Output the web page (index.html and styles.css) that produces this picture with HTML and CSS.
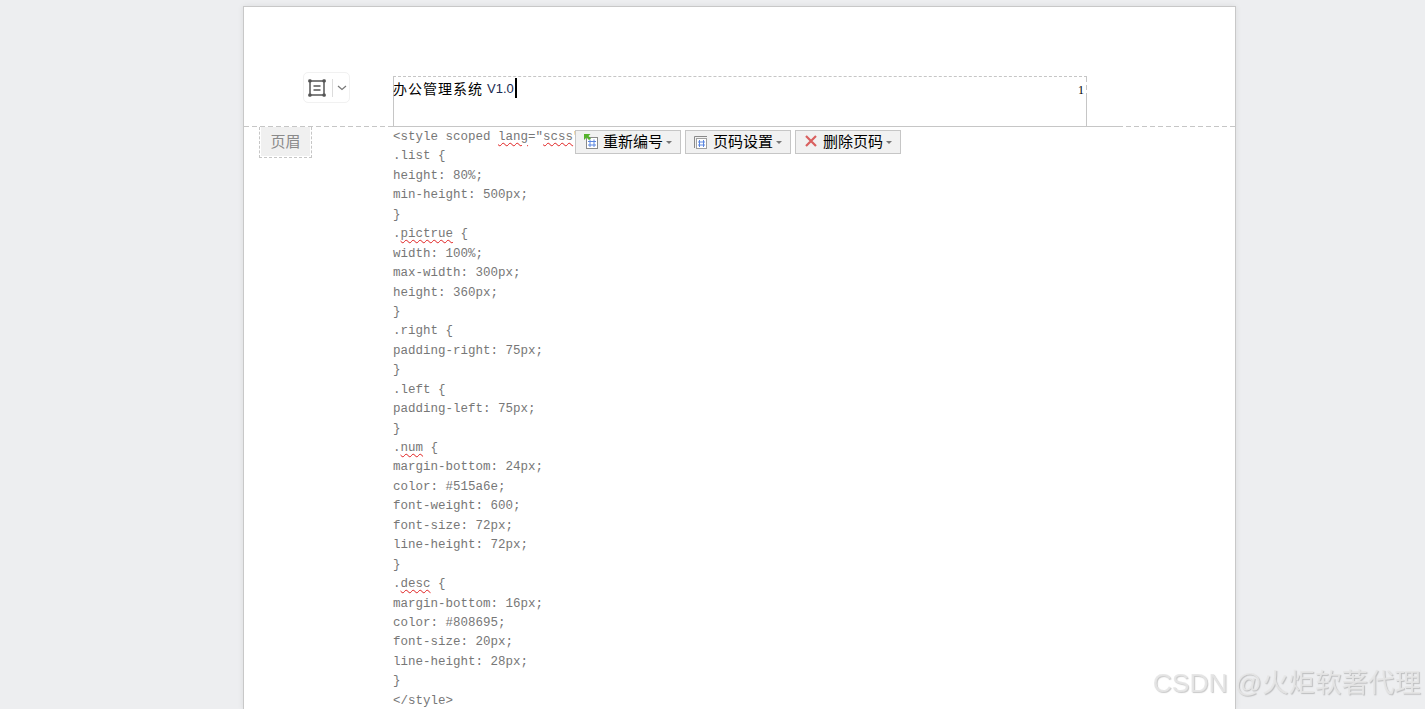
FILE: index.html
```html
<!DOCTYPE html>
<html lang="zh-CN">
<head>
<meta charset="utf-8">
<title>办公管理系统 V1.0</title>
<link rel="stylesheet" href="styles.css">
</head>
<body>
<main class="page">
  <section class="header">
    <div class="margin-col">
      <div class="handle">
        <svg class="handle-icon" width="20" height="20" viewBox="0 0 20 20">
          <rect x="3" y="3" width="14" height="14" fill="none" stroke="#555" stroke-width="1.5"/>
          <rect x="1.2" y="1.2" width="3.4" height="3.4" rx="1.4" fill="#555"/>
          <rect x="15.4" y="1.2" width="3.4" height="3.4" rx="1.4" fill="#555"/>
          <rect x="1.2" y="15.4" width="3.4" height="3.4" rx="1.4" fill="#555"/>
          <rect x="15.4" y="15.4" width="3.4" height="3.4" rx="1.4" fill="#555"/>
          <path d="M6.500 8h7M6.500 12h7" stroke="#555" stroke-width="1.300"/>
        </svg>
        <span class="handle-sep"></span>
        <svg class="handle-caret" width="10" height="6" viewBox="0 0 10 6"><path d="M1 1l4 3.500L9 1" fill="none" stroke="#777" stroke-width="1.200"/></svg>
      </div>
    </div>
    <div class="title-box">
      <div class="title-line"><span class="title-zh">办公管理系统</span><span class="title-ver">V1.0</span><span class="caret"></span></div>
      <div class="page-num">1</div>
    </div>
  </section>
  <section class="rule"><span class="rule-dash rule-left"></span><span class="rule-solid"></span><span class="rule-dash rule-right"></span></section>
  <section class="body">
    <div class="margin-col">
      <div class="tag"><span class="tag-inner">页眉</span></div>
    </div>
    <div class="code">
      <div class="line">&lt;style scoped <span class="typo">lang</span>="<span class="typo">scss</span>"&gt;</div>
      <div class="line">.list {</div>
      <div class="line">height: 80%;</div>
      <div class="line">min-height: 500px;</div>
      <div class="line">}</div>
      <div class="line">.<span class="typo">pictrue</span> {</div>
      <div class="line">width: 100%;</div>
      <div class="line">max-width: 300px;</div>
      <div class="line">height: 360px;</div>
      <div class="line">}</div>
      <div class="line">.right {</div>
      <div class="line">padding-right: 75px;</div>
      <div class="line">}</div>
      <div class="line">.left {</div>
      <div class="line">padding-left: 75px;</div>
      <div class="line">}</div>
      <div class="line">.<span class="typo">num</span> {</div>
      <div class="line">margin-bottom: 24px;</div>
      <div class="line">color: #515a6e;</div>
      <div class="line">font-weight: 600;</div>
      <div class="line">font-size: 72px;</div>
      <div class="line">line-height: 72px;</div>
      <div class="line">}</div>
      <div class="line">.<span class="typo">desc</span> {</div>
      <div class="line">margin-bottom: 16px;</div>
      <div class="line">color: #808695;</div>
      <div class="line">font-size: 20px;</div>
      <div class="line">line-height: 28px;</div>
      <div class="line">}</div>
      <div class="line">&lt;/style&gt;</div>
    </div>
  </section>
  <div class="toolbar">
    <button class="tool">
      <svg width="16" height="16" viewBox="0 0 16 16">
        <rect x="3.500" y="3.500" width="11" height="11" fill="#fff" stroke="#8a8a8a"/>
        <path d="M7 5.500v7.500M11 5.500v7.500M5 7.500h8M5 11h8" stroke="#5b86e0" stroke-width="1" fill="none"/>
        <path d="M1 0h6.500l-2 2 2.500 2.500-2 1.500-2.500-2.500-2.500 2.500z" fill="#55b32c"/>
      </svg>
      <span class="tool-label">重新编号</span><span class="tool-arrow"></span>
    </button>
    <button class="tool">
      <svg width="16" height="16" viewBox="0 0 16 16">
        <path d="M1.500 14V2.500H14" fill="none" stroke="#8a8a8a"/>
        <rect x="3.500" y="4.500" width="10" height="10" fill="#fff" stroke="#a0a0a0"/>
        <path d="M6.500 6v7M10.500 6v7M5 8h7M5 11h7" stroke="#5b86e0" stroke-width="1" fill="none"/>
      </svg>
      <span class="tool-label">页码设置</span><span class="tool-arrow"></span>
    </button>
    <button class="tool">
      <svg width="16" height="16" viewBox="0 0 16 16">
        <path d="M3 2l10 10M13 2l-10 10" stroke="#d9605f" stroke-width="2.200" fill="none"/>
      </svg>
      <span class="tool-label">删除页码</span><span class="tool-arrow"></span>
    </button>
  </div>
</main>
<div class="watermark">CSDN @火炬软著代理</div>
</body>
</html>
```
FILE: styles.css
```css
* { box-sizing: border-box; }
html, body { margin: 0; height: 709px; overflow: hidden; }
body {
  background: #edeef0;
  font-family: "Liberation Sans", "Noto Sans CJK SC", sans-serif;
  padding: 6px 0 0 243px;
}
.page {
  position: relative;
  width: 993px;
  height: 703px;
  background: #fff;
  border: 1px solid #c8c8c8;
  border-bottom: 0;
  box-shadow: 0 0 6px rgba(0, 0, 0, .08);
}
.header {
  display: flex;
  height: 119px;
  padding-top: 69px;
}
.margin-col { width: 149px; flex: none; }
.handle {
  display: flex;
  align-items: center;
  width: 47px;
  height: 31px;
  margin: -4px 0 0 59px;
  padding-left: 3px;
  border: 1px solid #f1f1f1;
  border-radius: 5px;
}
.handle-icon { flex: none; }
.handle-sep { width: 1px; height: 18px; margin: 0 4px 0 5px; background: #dcdcdc; }
.handle-caret { flex: none; }
.title-box {
  position: relative;
  width: 694px;
  height: 50px;
  border-left: 1px solid #c6c6c6;
  border-top: 1px dashed #c6c6c6;
  background:
    linear-gradient(#c6c6c6, #c6c6c6) right bottom / 1px 28px no-repeat,
    repeating-linear-gradient(180deg, #c6c6c6 0 5px, transparent 5px 8px) right top / 1px 22px no-repeat;
}
.title-line {
  display: flex;
  align-items: center;
  height: 22px;
  margin: 0 0 0 -1px;
  color: #000;
  white-space: pre;
}
.title-zh {
  font-family: "Noto Sans CJK SC", sans-serif;
  font-size: 14px;
  letter-spacing: 1px;
}
.title-ver { margin-left: 4px; font-size: 13px; color: #1a2a50; }
.caret { width: 2px; height: 20px; margin-left: 1px; background: #000; }
.page-num {
  position: absolute;
  right: 3px;
  top: 6px;
  font-size: 12px;
  font-family: "Liberation Serif", serif;
  color: #000;
}
.rule { display: flex; height: 1px; }
.rule-dash {
  display: block;
  height: 1px;
  background: repeating-linear-gradient(90deg, #c6c6c6 0 5px, transparent 5px 8px);
}
.rule-left { width: 149px; }
.rule-solid { display: block; width: 725px; height: 1px; background: #c6c6c6; }
.rule-right { flex: 1; }
.body { display: flex; }
.tag {
  width: 53px;
  height: 31px;
  margin-left: 15px;
  border: 1px dashed #c6c6c6;
  border-top: 0;
  padding: 0 1px 1px;
}
.tag-inner {
  display: block;
  height: 29px;
  line-height: 27px;
  background: #f0f0f0;
  color: #8a8a8a;
  font-family: "Noto Sans CJK SC", sans-serif;
  font-size: 15px;
  text-align: center;
}
.code {
  padding-top: 1px;
  font-family: "Liberation Mono", monospace;
  font-size: 12.5px;
  color: #777;
}
.line { height: 19.45px; line-height: 19.45px; white-space: pre; }
.typo {
  text-decoration: underline wavy #e02020;
  text-decoration-thickness: 1px;
  text-underline-offset: 2px;
}
.toolbar {
  position: absolute;
  left: 331px;
  top: 123px;
  display: flex;
  gap: 4px;
}
.tool {
  display: flex;
  align-items: center;
  width: 106px;
  height: 24px;
  padding: 0 0 0 7px;
  background: #f1f1f1;
  border: 1px solid #c6c6c6;
  font-family: "Noto Sans CJK SC", sans-serif;
  font-size: 15px;
  color: #000;
}
.tool svg { flex: none; }
.tool-label { margin-left: 4px; line-height: 20px; margin-bottom: 2px; white-space: nowrap; }
.tool-arrow {
  width: 0;
  height: 0;
  margin-left: 3px;
  border-left: 3px solid transparent;
  border-right: 3px solid transparent;
  border-top: 3px solid #777;
}
.watermark {
  position: fixed;
  right: 4px;
  top: 664px;
  font-family: "Liberation Sans", "Noto Sans CJK SC", sans-serif;
  font-size: 26.5px;
  line-height: 38px;
  color: rgba(230, 230, 230, .9);
  text-shadow: 1px 1px 1px rgba(120, 120, 120, .4);
  white-space: nowrap;
}
```
